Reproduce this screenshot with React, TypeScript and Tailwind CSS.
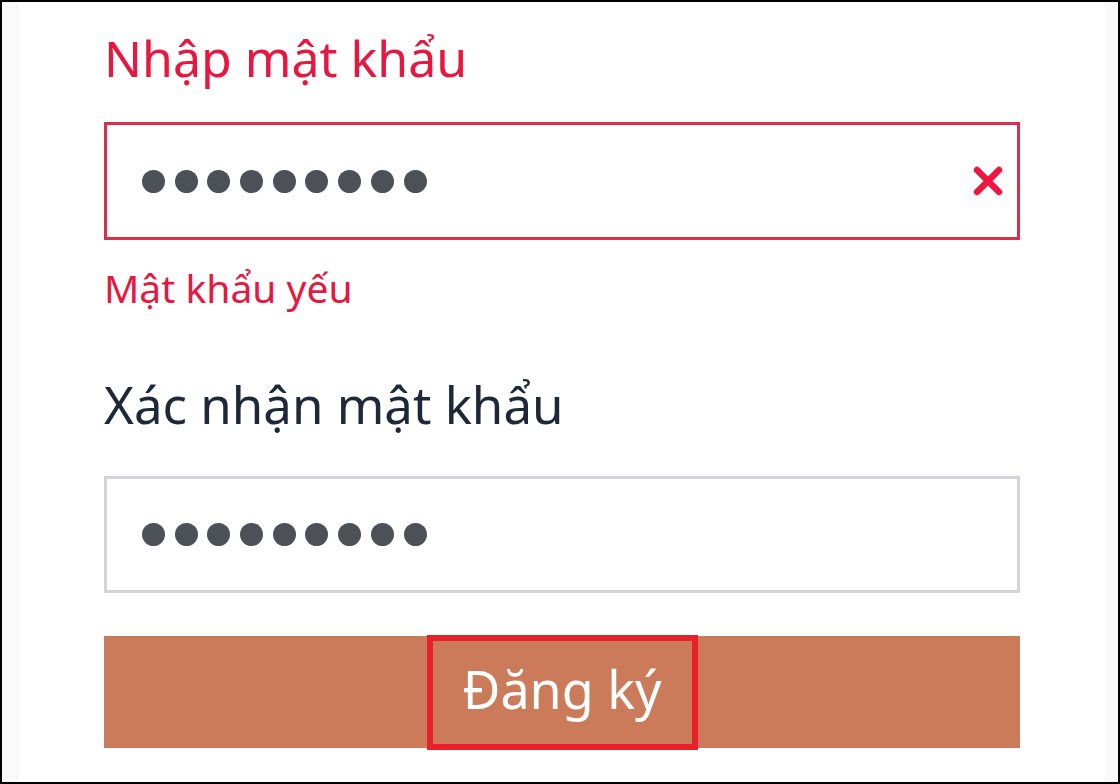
import * as React from 'react';

const FONT = "font-['Noto_Sans','Open_Sans',sans-serif]";

function Dots() {
  return (
    <div className="flex items-center gap-[9.7px]">
      {Array.from({ length: 9 }).map((_, i) => (
        <span key={i} className="block h-[23px] w-[23px] rounded-full bg-[#4b5157]" />
      ))}
    </div>
  );
}

function ClearIcon() {
  return (
    <svg width="34" height="34" viewBox="0 0 34 34" aria-hidden>
      <path d="M6 6 L28 28 M28 6 L6 28" stroke="#f0163f" strokeWidth="6.5" strokeLinecap="round" />
    </svg>
  );
}

export default function App() {
  return (
    <div className={`flex h-[784px] w-[1120px] border-2 border-black bg-white ${FONT}`}>
      <div className="w-[17px] bg-[#fafafa]" />
      <div className="flex flex-1 flex-col pl-[85px] pr-[85px]">
        {/* ── password ── */}
        <label className="mt-[24px] text-[50px] leading-[64px] text-[#e8173f]">Nhập mật khẩu</label>
        <div className="mt-[32px] flex h-[118px] items-center justify-between border-[3px] border-[#d7304a] pl-[35px] pr-[12px]">
          <Dots />
          <ClearIcon />
        </div>
        <p className="mt-[24px] text-[39px] leading-[48px] text-[#e8173f]">Mật khẩu yếu</p>

        {/* ── confirm ── */}
        <label className="mt-[60px] text-[51px] leading-[64px] text-[#1d2939]">Xác nhận mật khẩu</label>
        <div className="mt-[40px] flex h-[117px] items-center border-[3px] border-[#d4d4d8] pl-[35px]">
          <Dots />
        </div>

        {/* ── submit ── */}
        <button
          type="button"
          className="mt-[43px] flex h-[112px] items-center justify-center bg-[#cc7b5a]"
        >
          <span className="flex h-[115px] w-[271px] items-center justify-center border-[6px] border-[#e8202b] pb-[6px] text-[52px] text-white">
            Đăng ký
          </span>
        </button>
      </div>
      <div className="w-[13px] bg-[#fafafa]" />
    </div>
  );
}
